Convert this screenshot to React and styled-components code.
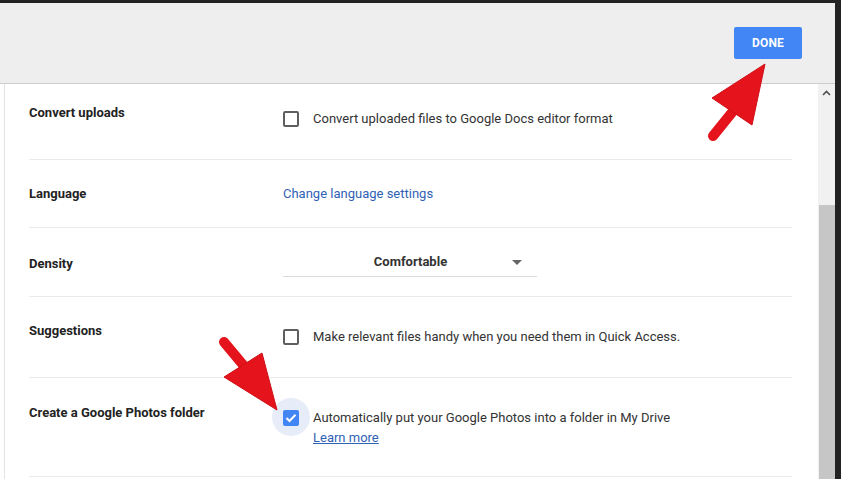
import React from 'react';
import styled, { createGlobalStyle } from 'styled-components';

const GlobalStyle = createGlobalStyle`
  html, body { margin: 0; padding: 0; background: #222; }
  body { font-family: Roboto, "Liberation Sans", Arial, sans-serif; }
`;

const Frame = styled.div`
  position: relative;
  width: 841px;
  height: 479px;
  box-sizing: border-box;
  padding: 3px 6px 0 0;
  background: #222;
  overflow: hidden;
`;

const Window = styled.div`
  height: 100%;
  display: flex;
  flex-direction: column;
  background: #fff;
`;

const Header = styled.div`
  height: 81px;
  flex: none;
  display: flex;
  justify-content: flex-end;
  align-items: flex-start;
  box-sizing: border-box;
  padding: 24px 33px 0 0;
  background: #eeeeee;
  border-bottom: 1px solid #cdcdcd;
`;

const DoneButton = styled.button`
  width: 68px;
  height: 32px;
  border: none;
  border-radius: 2px;
  background: #4285f4;
  color: #fff;
  font-family: Roboto, "Liberation Sans", Arial, sans-serif;
  font-size: 12px;
  font-weight: 700;
  letter-spacing: 0.2px;
`;

const Body = styled.div`
  flex: 1;
  display: flex;
  min-height: 0;
`;

const Main = styled.div`
  flex: 1;
  margin-left: 4px;
  border-left: 1px solid #e4e4e4;
  padding: 0 26px 0 24px;
  overflow: hidden;
`;

const Row = styled.div`
  display: grid;
  grid-template-columns: 254px 1fr;
  align-items: start;
  padding: ${p => p.$pt}px 0 ${p => p.$pb}px;
  border-bottom: 1px solid #ebebeb;
`;

const Label = styled.div`
  font-size: 13px;
  line-height: 16px;
  font-weight: 700;
  color: #222;
`;

const Control = styled.div`
  display: flex;
  flex-direction: column;
  margin-top: ${p => p.$mt || 0}px;
`;

const CheckItem = styled.div`
  display: flex;
  align-items: center;
  gap: 14px;
  font-size: 13px;
  line-height: 16px;
  color: #333;
`;

const Box = styled.span`
  position: relative;
  width: 16px;
  height: 16px;
  flex: none;
  box-sizing: border-box;
  border-radius: 2px;
  border: ${p => (p.$checked ? 'none' : '2px solid #5f5f5f')};
  background: ${p => (p.$checked ? '#4285f4' : '#fff')};
  display: flex;
  align-items: center;
  justify-content: center;
  ${p => p.$checked && `
    &::before {
      content: '';
      position: absolute;
      left: -11px;
      top: -12px;
      width: 38px;
      height: 38px;
      border-radius: 50%;
      background: #e7edf8;
      z-index: -1;
    }
  `}
`;

const BoxWrap = styled.span`
  position: relative;
  z-index: 0;
  display: flex;
`;

const Link = styled.a`
  font-size: 13px;
  line-height: 16px;
  color: #2f62b5;
  text-decoration: ${p => (p.$underline ? 'underline' : 'none')};
  cursor: pointer;
`;

const SubLink = styled.div`
  padding-left: 30px;
  margin-top: 1px;
`;

const Select = styled.div`
  width: 254px;
  display: flex;
  align-items: center;
  box-sizing: border-box;
  padding: 0 15px 6px 0;
  margin-top: -2px;
  border-bottom: 1px solid #dcdcdc;
`;

const SelectValue = styled.span`
  flex: 1;
  text-align: center;
  padding-left: 26px;
  font-size: 13px;
  line-height: 16px;
  font-weight: 700;
  color: #333;
`;

const Caret = styled.span`
  width: 0;
  height: 0;
  border-left: 5px solid transparent;
  border-right: 5px solid transparent;
  border-top: 5px solid #666;
`;

const ScrollBar = styled.div`
  width: 17px;
  flex: none;
  display: flex;
  flex-direction: column;
  background: #f1f1f1;
`;

const ScrollButton = styled.div`
  height: 17px;
  display: flex;
  align-items: center;
  justify-content: center;
`;

const Thumb = styled.div`
  margin-top: 104px;
  flex: 1;
  margin-left: 1px;
  background: #c6c6c6;
`;

const Overlay = styled.svg`
  position: absolute;
  left: 0;
  top: 0;
  pointer-events: none;
`;

const Checkbox = ({ checked }) => (
  <BoxWrap>
    <Box $checked={checked}>
      {checked && (
        <svg width="12" height="10" viewBox="0 0 12 10">
          <polyline points="1.5,5 4.5,8 10.5,1.8" fill="none" stroke="#fff" strokeWidth="2" />
        </svg>
      )}
    </Box>
  </BoxWrap>
);

const Arrow = ({ tail, neck, left, right, tip }) => (
  <g fill="#e5141c" stroke="#d00f17" strokeLinejoin="round">
    <line x1={tail[0]} y1={tail[1]} x2={neck[0]} y2={neck[1]} stroke="#e5141c" strokeWidth="10" strokeLinecap="round" />
    <polygon points={`${tip[0]},${tip[1]} ${left[0]},${left[1]} ${right[0]},${right[1]}`} strokeWidth="1" />
  </g>
);

export default function App() {
  return (
    <>
      <GlobalStyle />
      <Frame>
        <Window>
          <Header>
            <DoneButton>DONE</DoneButton>
          </Header>
          <Body>
            <Main>
              <Row $pt={21} $pb={32}>
                <Label>Convert uploads</Label>
                <Control $mt={6}>
                  <CheckItem>
                    <Checkbox />
                    Convert uploaded files to Google Docs editor format
                  </CheckItem>
                </Control>
              </Row>
              <Row $pt={26} $pb={25}>
                <Label>Language</Label>
                <Control>
                  <Link>Change language settings</Link>
                </Control>
              </Row>
              <Row $pt={28} $pb={19}>
                <Label>Density</Label>
                <Select>
                  <SelectValue>Comfortable</SelectValue>
                  <Caret />
                </Select>
              </Row>
              <Row $pt={26} $pb={32}>
                <Label>Suggestions</Label>
                <Control $mt={6}>
                  <CheckItem>
                    <Checkbox />
                    Make relevant files handy when you need them in Quick Access.
                  </CheckItem>
                </Control>
              </Row>
              <Row $pt={27} $pb={30}>
                <Label>Create a Google Photos folder</Label>
                <Control $mt={5}>
                  <CheckItem>
                    <Checkbox checked />
                    Automatically put your Google Photos into a folder in My Drive
                  </CheckItem>
                  <SubLink>
                    <Link $underline>Learn more</Link>
                  </SubLink>
                </Control>
              </Row>
            </Main>
            <ScrollBar>
              <ScrollButton>
                <svg width="9" height="6" viewBox="0 0 9 6">
                  <polyline points="1,5 4.5,1.5 8,5" fill="none" stroke="#505050" strokeWidth="1.6" />
                </svg>
              </ScrollButton>
              <Thumb />
            </ScrollBar>
          </Body>
        </Window>
        <Overlay width="841" height="479" viewBox="0 0 841 479">
          <Arrow tail={[713, 136]} neck={[734, 110]} left={[712, 98]} right={[752, 125]} tip={[765, 64]} />
          <Arrow tail={[224, 342]} neck={[244, 366]} left={[224, 377]} right={[262, 353]} tip={[277, 410]} />
        </Overlay>
      </Frame>
    </>
  );
}
